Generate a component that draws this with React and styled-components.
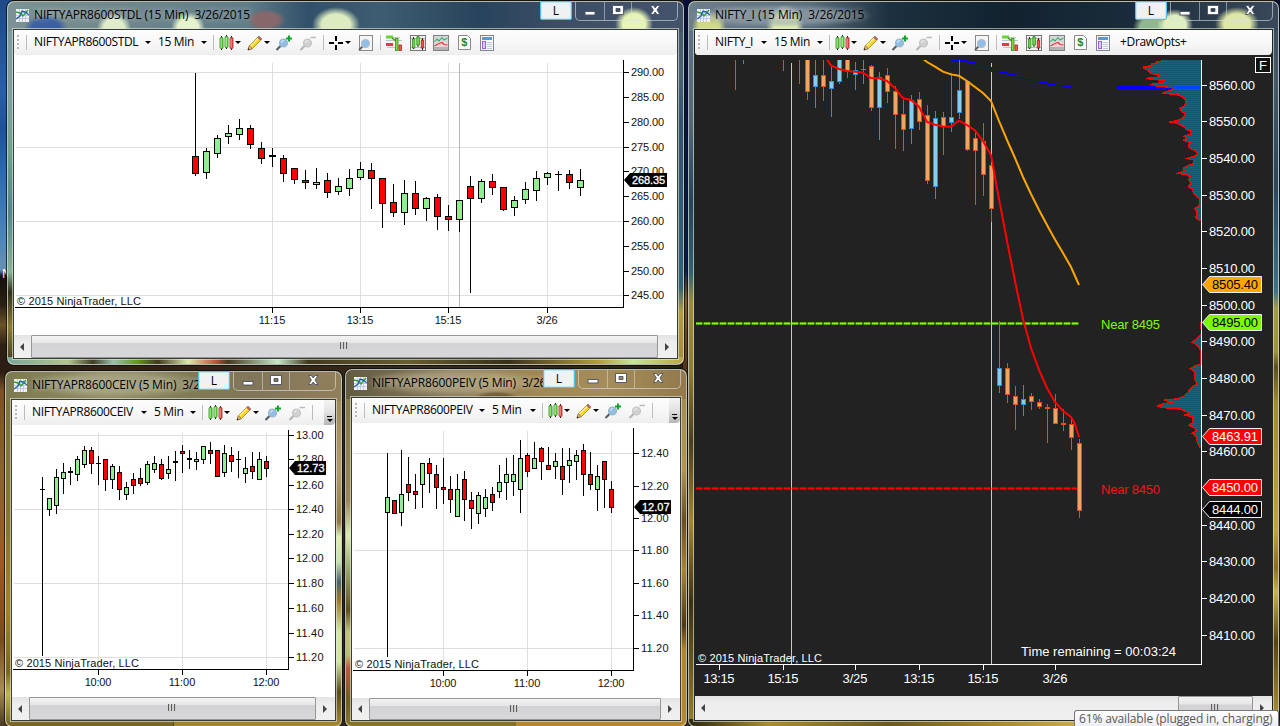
import React from 'react';
import styled, { createGlobalStyle } from 'styled-components';

const GlobalStyle = createGlobalStyle`
  * {
    box-sizing: border-box;
  }

  body {
    margin: 0;
    overflow: hidden;
    font-family: 'Open Sans', 'Noto Sans', sans-serif;
    font-size: 12px;
    color: #000000;
  }
`;

const Desktop = styled.div`
  position: relative;
  width: 1280px;
  height: 726px;
  overflow: hidden;
  background: linear-gradient(
        180deg,
        #1e4a86 0,
        #2a5ea6 90px,
        #1f5196 130px,
        #2b68ae 170px,
        #4f86b8 240px,
        #6a90b0 270px,
        #14100c 276px,
        #2b2014 305px,
        #6b5428 325px,
        #2e2013 345px,
        #2c1d12 372px,
        #7c4f24 390px,
        #8a6230 470px,
        #9c5a28 560px,
        #7a4a20 640px,
        #a88a58 690px,
        #4a3a20 726px
      )
      left / 12px 100% no-repeat,
    linear-gradient(180deg, #04103c 0, #0a1c50 270px, #7b5a26 300px, #4b2d14 380px, #3c2a12 726px)
      683px 0 / 8px 100% no-repeat,
    linear-gradient(180deg, #020a30 0, #173a5c 240px, #5a4a1e 320px, #3a2a10 726px)
      right / 6px 100% no-repeat,
    linear-gradient(90deg, #2c1d12, #3a2a18 40%, #1c140c 60%, #5a3c1e);
`;

const IconCaption = styled.span`
  position: absolute;
  left: 2px;
  top: 265px;
  color: #ffffff;
  font-size: 12px;
`;

const Window = styled.section`
  position: absolute;
  left: ${p => p.$x}px;
  top: ${p => p.$y}px;
  width: ${p => p.$w}px;
  height: ${p => p.$h}px;
  display: flex;
  flex-direction: column;
  padding: 0 5px 5px;
  border: 1px solid rgba(225, 235, 220, 0.75);
  border-radius: 7px;
  box-shadow: 0 0 0 1px rgba(10, 12, 16, 0.75);
  background: ${p => p.$glass};
`;

const TitleBar = styled.header`
  flex: 0 0 27px;
  display: flex;
  align-items: flex-start;
  min-width: 0;
`;

const TitleText = styled.h1`
  flex: 1;
  min-width: 0;
  margin: 4px 0 0 5px;
  overflow: hidden;
  white-space: pre;
  font-size: 12px;
  line-height: 18px;
  font-weight: 400;
  letter-spacing: ${p => p.$track || -0.14}px;
  text-shadow: 0 0 6px rgba(255, 255, 255, 0.45), 0 0 10px rgba(255, 255, 255, 0.35);
`;

const LinkButton = styled.button`
  flex: none;
  width: 32px;
  height: 19px;
  margin: -1px 3px 0 0;
  padding: 0;
  border: 1px solid #4fc3ee;
  border-radius: 2px;
  box-shadow: inset 0 0 0 1px #c6e6f6;
  background: #f1f1f1;
  font: 12px/16px 'Open Sans', sans-serif;
`;

const Controls = styled.div`
  flex: none;
  display: flex;
  width: 103px;
  height: 19px;
  border: 1px solid rgba(220, 226, 232, 0.6);
  border-top: 0;
  border-radius: 0 0 5px 5px;
`;

const Control = styled.span`
  flex: ${p => (p.$wide ? 1 : `0 0 ${p.$w}px`)};
  display: flex;
  justify-content: center;
  border-left: ${p => (p.$first ? 0 : '1px solid rgba(220, 226, 232, 0.5)')};
`;

const Client = styled.div`
  flex: 1;
  min-height: 0;
  display: flex;
  flex-direction: column;
  border: 1px solid rgba(35, 40, 35, 0.9);
  outline: 1px solid rgba(225, 235, 220, 0.6);
  background: ${p => (p.$dark ? '#222222' : '#ffffff')};
`;

const Toolbar = styled.nav`
  flex: 0 0 25px;
  display: flex;
  align-items: center;
  height: 25px;
  overflow: hidden;
  border-radius: 0 0 4px 3px;
  background: linear-gradient(180deg, #fdfdfd 0%, #f7f7f7 55%, #eeeeee 100%);
`;

const Grip = styled.i`
  width: 2px;
  height: 15px;
  margin: 0 7px 0 3px;
  background: repeating-linear-gradient(180deg, #b8b8b8 0 2px, transparent 2px 4px);
`;

const Separator = styled.i`
  flex: none;
  width: 1px;
  height: 15px;
  margin-left: ${p => p.$before || 0}px;
  margin-right: ${p => p.$after || 0}px;
  background: #bdbdbd;
`;

const ToolText = styled.span`
  flex: none;
  width: ${p => p.$w}px;
  white-space: nowrap;
  line-height: 18px;
  letter-spacing: ${p => p.$track || -0.34}px;
  margin-left: ${p => p.$before || 0}px;
  margin-top: -2px;
`;

const DropArrow = styled.i`
  flex: none;
  display: flex;
  justify-content: center;
  width: ${p => p.$w || 7}px;

  &::after {
    content: '';
    border: 3px solid transparent;
    border-top-color: #000000;
    border-bottom: 0;
  }
`;

const Tool = styled.svg`
  flex: none;
  display: block;
  margin-left: ${p => p.$before || 0}px;
  margin-top: ${p => p.$drop || 0}px;
`;

const Overflow = styled.span`
  flex: none;
  align-self: stretch;
  display: flex;
  flex-direction: column;
  align-items: center;
  justify-content: flex-end;
  gap: 2px;
  width: 11px;
  margin-left: auto;
  padding-bottom: 3px;
  border-radius: 0 0 3px 0;
  background: linear-gradient(180deg, #f4f4f4, #e2e2e2 50%, #b5b5b5);

  &::before {
    content: '';
    width: 5px;
    height: 1px;
    background: #000000;
  }

  &::after {
    content: '';
    border: 3px solid transparent;
    border-top-color: #000000;
    border-bottom: 0;
  }
`;

const Chart = styled.svg`
  flex: 1;
  min-height: 0;
  display: block;
  width: 100%;
  font-family: 'Liberation Sans', Arial, sans-serif;
`;

const ScrollBar = styled.div`
  flex: 0 0 ${p => p.$h || 22}px;
  display: flex;
  align-items: stretch;
  background: linear-gradient(180deg, #e3e3e3, #ededed 30%, #f0f0f0);
`;

const ScrollArrow = styled.i`
  flex: 0 0 ${p => p.$w || 17}px;
  display: flex;
  align-items: center;
  justify-content: center;
  padding-right: 1px;

  &::after {
    content: '';
    border: 4px solid transparent;
    border-left: ${p => (p.$left ? '0' : '4px solid #444444')};
    border-right: ${p => (p.$left ? '4px solid #444444' : '0')};
  }
`;

const Track = styled.div`
  flex: 1;
  display: flex;
  justify-content: flex-end;
`;

const Thumb = styled.div`
  width: ${p => p.$w || '100%'};
  display: flex;
  align-items: center;
  justify-content: center;
  border: 1px solid #979797;
  border-radius: 1px;
  background: linear-gradient(180deg, #f3f3f3 0, #e6e6e8 33%, #d2d2d5 36%, #d8d8da 100%);

  &::after {
    content: '';
    width: 8px;
    height: 7px;
    margin: -2px 2px 0 0;
    background: repeating-linear-gradient(90deg, #5f5f5f 0 1px, #c9c9c9 1px 2px, transparent 2px 3px);
  }
`;

const Tooltip = styled.div`
  position: absolute;
  left: 1074px;
  top: 710px;
  width: 205px;
  height: 16px;
  padding: 1px 0 0 4px;
  border: 1px solid #767676;
  border-bottom: 0;
  border-radius: 3px 3px 0 0;
  background: linear-gradient(180deg, #ffffff, #ececf4);
  color: #575757;
  line-height: 14px;
  letter-spacing: -0.15px;
  white-space: nowrap;
`;

function AppIcon() {
  return (
    <Tool width='13' height='13' viewBox='0 0 13 13' $before={3} $drop={7}>
      <rect width='13' height='13' fill='#eef0fa' />
      <path d='M0 3.5H13M0 6.5H13M0 9.5H13M3.5 0V13M6.5 0V13M9.5 0V13' stroke='#b5b8da' strokeWidth='.7' />
      <path d='M0 3L4 4L7 7L12 1' stroke='#2fa52f' strokeWidth='1.5' fill='none' />
      <path d='M0 10L4 7L6 2L9 3L13 6' stroke='#2763b4' strokeWidth='1.4' fill='none' />
    </Tool>
  );
}

function CandlesIcon() {
  return (
    <Tool width='15' height='16' viewBox='0 0 15 16' $before={5}>
      <path d='M2.5 1V15M7.5 0V14M12.5 1V15' stroke='#222222' />
      <rect x='1' y='2.5' width='3' height='11' rx='1' fill='#5fe03a' stroke='#2c7d1c' strokeWidth='.8' />
      <rect x='6' y='1.5' width='3' height='11' rx='1' fill='#70ea45' stroke='#2c7d1c' strokeWidth='.8' />
      <rect x='11' y='2.5' width='3' height='11' rx='1' fill='#f0504a' stroke='#a8231f' strokeWidth='.8' />
      <path d='M2 3.5V12.5M7 2.5V11.5M12 3.5V12.5' stroke='#ffffff' strokeOpacity='.6' strokeWidth='.8' />
    </Tool>
  );
}

function PencilIcon() {
  return (
    <Tool width='16' height='16' viewBox='0 0 16 16' $before={5}>
      <path d='M1 15L2.5 10.5L10.5 2.5L13.5 5.5L5.5 13.5Z' fill='#fbd425' stroke='#a98312' strokeWidth='.8' />
      <path d='M3.5 11L11.3 3.3' stroke='#fff29a' strokeWidth='1.2' />
      <path d='M1 15L2.3 10.8L5.3 13.6Z' fill='#ecc48c' stroke='#6b5030' strokeWidth='.6' />
      <path d='M.8 15.2L1.5 13L3 14.4Z' fill='#333333' />
      <path d='M10.5 2.5L12 1L15 4L13.5 5.5Z' fill='#e05a50' stroke='#7b8494' strokeWidth='.8' />
    </Tool>
  );
}

function ZoomIcon({ out, before }) {
  return (
    <Tool width='16' height='16' viewBox='0 0 16 16' $before={before}>
      <path d='M.5 15L5 10.5' stroke={out ? '#b5b5b5' : '#555f68'} strokeWidth='2.2' />
      <circle cx='7.5' cy='8' r='4' fill={out ? '#d0d0d0' : '#8fbfe6'} stroke={out ? '#c4c4c4' : '#a5b2bf'} strokeWidth='1.1' />
      <path d='M5.5 7.5Q6 5.6 8 5.5' stroke='#ffffff' strokeOpacity='.7' strokeWidth='1.2' fill='none' />
      {out ? (
        <path d='M10.5 2.5H16' stroke='#bbbbbb' strokeWidth='1.6' />
      ) : (
        <path d='M10 3.5H16M13 .5V6.5' stroke='#12a52d' strokeWidth='2' />
      )}
    </Tool>
  );
}

function CrossIcon() {
  return (
    <Tool width='14' height='14' viewBox='0 0 14 14' $before={5}>
      <path d='M0 7H5M9 7H14M7 0V5M7 9V14' stroke='#000000' strokeWidth='2' />
    </Tool>
  );
}

function PageZoomIcon() {
  return (
    <Tool width='15' height='16' viewBox='0 0 15 16' $before={6}>
      <rect x='1.5' y='.5' width='13' height='15' fill='#f5f5f5' stroke='#8a8a8a' />
      <path d='M1 15L5 11' stroke='#666666' strokeWidth='2' />
      <circle cx='7.5' cy='8.5' r='4' fill='#8fbfe6' stroke='#b5c0cc' strokeWidth='1.2' />
    </Tool>
  );
}

function DomIcon() {
  return (
    <Tool width='16' height='16' viewBox='0 0 16 16' $before={5}>
      <path d='M0 5.5H16M1 12.5H12M7 2.5H14' stroke='#c4c4c4' />
      <rect x='0' y='.5' width='7' height='3' fill='#62d832' />
      <path d='M6 3L10 6' stroke='#3b8f1f' strokeWidth='1.5' />
      <rect x='0' y='8' width='7' height='3' fill='#e83a32' />
      <rect x='9.5' y='3.5' width='2.5' height='12' fill='#6fdf3f' stroke='#358b20' strokeWidth='.8' />
      <rect x='13' y='10' width='2.5' height='5.5' fill='#f05a50' stroke='#a02822' strokeWidth='.8' />
    </Tool>
  );
}

function BarsBoxIcon() {
  return (
    <Tool width='16' height='16' viewBox='0 0 16 16' $before={8}>
      <rect x='.5' y='.5' width='15' height='15' fill='#f3f3f3' stroke='#777777' />
      <path d='M1 3.5H15M1 12.5H15' stroke='#bbbbbb' />
      <path d='M3.5 2V14M8 1V12M12.5 3V15' stroke='#222222' />
      <rect x='2.3' y='4' width='2.6' height='9' fill='#66dd3d' stroke='#2d7c1e' strokeWidth='.7' />
      <rect x='6.8' y='2' width='2.6' height='8' fill='#66dd3d' stroke='#2d7c1e' strokeWidth='.7' />
      <rect x='11.2' y='5' width='2.6' height='8' fill='#ee4b44' stroke='#98211d' strokeWidth='.7' />
    </Tool>
  );
}

function IndicatorIcon() {
  return (
    <Tool width='16' height='16' viewBox='0 0 16 16' $before={7}>
      <rect x='.5' y='.5' width='15' height='15' fill='#d9d9d9' stroke='#808080' />
      <rect x='1' y='12' width='14' height='3' fill='#b3b3b3' />
      <path d='M1.5 7L4 4L6 6L9 2.5L11 5L14.5 3' stroke='#2fae6d' strokeWidth='1.1' fill='none' />
      <path d='M1.5 11L5 9L9 7.5L11 9.5L14.5 10' stroke='#ee3434' strokeWidth='1.1' fill='none' />
    </Tool>
  );
}

function StrategyIcon() {
  return (
    <Tool width='13' height='15' viewBox='0 0 13 15' $before={9}>
      <path d='M.5 .5H9.5L12.5 3.5V14.5H.5Z' fill='#fbfbfb' stroke='#8a8a8a' />
      <text x='6.3' y='11.4' textAnchor='middle' fontSize='11' fontWeight='700' fontFamily='Liberation Sans, Arial, sans-serif' fill='#1b8a24'>
        $
      </text>
    </Tool>
  );
}

function PropertiesIcon() {
  return (
    <Tool width='14' height='16' viewBox='0 0 14 16' $before={9}>
      <rect x='.5' y='.5' width='13' height='15' fill='#f6f8fc' stroke='#7d8796' />
      <rect x='2' y='2' width='10' height='3' fill='#4f9be0' />
      <rect x='2.5' y='6.5' width='3' height='7' fill='#ddccff' stroke='#9a62ea' />
      <path d='M7 7.5H12M7 9.5H12M7 11.5H12M7 13.5H12' stroke='#c3cad6' />
    </Tool>
  );
}

function WindowButtons() {
  return (
    <Controls>
      <Control $first $w={28}>
        <svg width='14' height='19' viewBox='0 0 14 19'>
          <rect x='2' y='9.5' width='10' height='3.5' fill='#ffffff' stroke='#4a5060' strokeWidth='.9' />
        </svg>
      </Control>
      <Control $w={27}>
        <svg width='14' height='19' viewBox='0 0 14 19'>
          <path d='M1.5 3.5H12.5V12.5H1.5ZM5 6.5V9.5H9V6.5Z' fill='#ffffff' fillRule='evenodd' stroke='#4a5060' strokeWidth='.9' />
        </svg>
      </Control>
      <Control $wide>
        <svg width='14' height='19' viewBox='0 0 14 19'>
          <path
            d='M2.5 3.5H5.3L7.2 6L9.1 3.5H11.9L9 8L11.9 12.5H9.1L7.2 10L5.3 12.5H2.5L5.4 8Z'
            fill='#ffffff'
            stroke='#4a5060'
            strokeWidth='.9'
          />
        </svg>
      </Control>
    </Controls>
  );
}

function ChartToolbar({ symbol, symbolWidth, period, periodWidth, compact, extra }) {
  return (
    <Toolbar>
      <Grip />
      <Separator $after={7} />
      <ToolText $w={symbolWidth}>{symbol}</ToolText>
      <DropArrow $w={20} />
      <ToolText $w={periodWidth}>{period}</ToolText>
      <DropArrow $w={19} />
      <Separator />
      <CandlesIcon />
      <DropArrow $w={8} />
      <PencilIcon />
      <DropArrow $w={7} />
      <ZoomIcon before={6} />
      <ZoomIcon out before={8} />
      <Separator $before={7} />
      {compact ? (
        <Overflow />
      ) : (
        <>
          <CrossIcon />
          <DropArrow $w={9} />
          <PageZoomIcon />
          <Separator $before={7} />
          <DomIcon />
          <BarsBoxIcon />
          <IndicatorIcon />
          <StrategyIcon />
          <PropertiesIcon />
          {extra && <ToolText $w={70} $before={10}>{extra}</ToolText>}
        </>
      )}
    </Toolbar>
  );
}

const LIGHT = {
  u: ['#000000', '#90ee90'],
  d: ['#000000', '#ff0000'],
};

const DARK = {
  u: ['#1e90ff', '#87ceeb'],
  d: ['#ff4500', '#f4a460'],
};

// each bar is [high, body top, body bottom, low, direction]
function Candles({ bars, start, step, body, palette }) {
  return (
    <g shapeRendering='crispEdges'>
      {bars.map(([h, t, b, l, dir], i) => {
        const x = start + i * step;
        const half = (body - 1) / 2;
        const [line, fill] = palette[dir];
        return (
          <g key={x}>
            <rect x={x} y={h} width='1' height={l - h} fill={line} />
            <rect x={x - half} y={t} width={body} height={b - t} fill={line} />
            {b - t > 2 && <rect x={x - half + 1} y={t + 1} width={body - 2} height={b - t - 2} fill={fill} />}
          </g>
        );
      })}
    </g>
  );
}

function LightChart({ box, rows, cols, axisX, axisY, top, prices, times, labelY, marker, mark, session, ...candles }) {
  const [bx, by, bw, bh] = box;
  return (
    <Chart viewBox={box.join(' ')} preserveAspectRatio='xMinYMin slice' fontSize='11'>
      <rect x={bx} y={by} width={bw} height={bh} fill='#ffffff' />
      <g shapeRendering='crispEdges'>
        {rows.map(y => (
          <rect key={y} x={bx + 2} y={y} width={axisX - bx - 2} height='1' fill='#dedede' />
        ))}
        {cols.map(x => (
          <rect key={x} x={x} y={top + 3} width='1' height={axisY - top - 3} fill='#dedede' />
        ))}
        {session && <rect x={session} y={top + 3} width='1' height={axisY - top - 3} fill='#b8b8b8' />}
        <rect x={axisX} y={top} width='1' height={axisY - top + 1} fill='#000000' />
        <rect x={bx + 1} y={axisY} width={axisX - bx} height='1' fill='#000000' />
      </g>
      <Candles palette={LIGHT} {...candles} />
      {prices.map(([label, y]) => (
        <g key={label}>
          <rect x={axisX + 1} y={y} width='5' height='1' fill='#000000' />
          <text x={axisX + 8} y={y + 4} textLength={label.length * 5.5} fill='#111111'>
            {label}
          </text>
        </g>
      ))}
      {times.map(([label, x]) => (
        <g key={label}>
          <rect x={x} y={axisY + 1} width='1' height='5' fill='#000000' />
          <text x={x} y={labelY} textAnchor='middle' textLength={label.length * 5.3} fill='#111111'>
            {label}
          </text>
        </g>
      ))}
      <text x={bx + 3} y={mark} textLength='124' fill='#111111'>
        © 2015 NinjaTrader, LLC
      </text>
      <path
        d={`M${axisX + 1} ${marker[1] + 7}L${axisX + 7} ${marker[1]}H${axisX + marker[2]}V${marker[1] + 14}H${axisX + 7}Z`}
        fill='#000000'
      />
      <text x={axisX + 9} y={marker[1] + 11} textLength={marker[0].length * 5.5} fill='#ffffff' stroke='#ffffff' strokeWidth='.3'>
        {marker[0]}
      </text>
    </Chart>
  );
}

const STDL = [
  [73, 156, 174, 176, 'd'], [148, 151, 173, 179, 'u'], [135, 138, 154, 158, 'u'], [125, 133, 137, 144, 'u'],
  [119, 128, 135, 140, 'u'], [125, 128, 145, 149, 'd'], [142, 148, 159, 164, 'd'], [148, 155, 157, 167, 'd'],
  [155, 158, 174, 182, 'd'], [168, 168, 180, 184, 'd'], [170, 180, 183, 189, 'd'], [168, 182, 185, 189, 'u'],
  [173, 180, 193, 198, 'd'], [178, 186, 192, 195, 'u'], [169, 178, 189, 196, 'u'], [162, 169, 178, 180, 'u'],
  [163, 170, 179, 209, 'd'], [178, 178, 204, 228, 'd'], [184, 202, 213, 217, 'd'], [180, 193, 213, 225, 'u'],
  [181, 193, 209, 215, 'd'], [197, 198, 209, 221, 'u'], [194, 197, 217, 230, 'd'], [205, 216, 220, 231, 'd'],
  [200, 200, 220, 232, 'u'], [176, 186, 199, 293, 'd'], [179, 181, 199, 203, 'u'], [174, 181, 188, 195, 'd'],
  [187, 187, 210, 211, 'd'], [196, 200, 208, 216, 'u'], [182, 189, 200, 204, 'u'], [171, 178, 191, 201, 'u'],
  [172, 173, 178, 185, 'u'], [171, 174, 175, 191, 'd'], [170, 174, 183, 189, 'd'], [169, 180, 188, 196, 'u'],
];

const CEIV = [
  [477, 489, 490, 656, 'd'], [498, 498, 510, 516, 'u'], [469, 477, 506, 514, 'u'], [463, 472, 479, 494, 'u'],
  [467, 471, 473, 485, 'd'], [456, 459, 475, 481, 'u'], [446, 450, 465, 468, 'u'], [447, 450, 464, 474, 'd'],
  [456, 463, 464, 485, 'd'], [459, 459, 480, 491, 'd'], [464, 466, 480, 489, 'u'], [466, 472, 490, 500, 'd'],
  [482, 487, 495, 500, 'u'], [473, 479, 486, 494, 'd'], [468, 478, 484, 486, 'd'], [461, 464, 483, 485, 'u'],
  [456, 463, 470, 473, 'u'], [459, 464, 479, 480, 'd'], [456, 469, 474, 479, 'u'], [451, 461, 463, 481, 'd'],
  [445, 451, 454, 473, 'd'], [450, 458, 460, 469, 'd'], [452, 459, 462, 470, 'u'], [446, 446, 460, 464, 'u'],
  [442, 450, 454, 464, 'd'], [450, 450, 477, 477, 'd'], [445, 453, 473, 477, 'u'], [447, 455, 462, 472, 'd'],
  [451, 459, 460, 478, 'd'], [457, 468, 474, 483, 'u'], [452, 466, 472, 479, 'd'], [452, 459, 480, 480, 'u'],
  [456, 461, 469, 477, 'd'],
];

const PEIV = [
  [453, 497, 513, 657, 'u'], [500, 500, 514, 514, 'd'], [450, 494, 513, 526, 'u'], [457, 484, 493, 501, 'd'],
  [474, 491, 495, 509, 'd'], [463, 463, 485, 508, 'u'], [458, 463, 474, 493, 'd'], [465, 474, 488, 509, 'd'],
  [458, 487, 490, 504, 'd'], [476, 489, 500, 513, 'd'], [474, 489, 517, 517, 'u'], [471, 479, 500, 521, 'd'],
  [492, 500, 509, 529, 'd'], [492, 495, 514, 524, 'u'], [489, 497, 509, 517, 'u'], [487, 494, 503, 511, 'd'],
  [465, 482, 492, 498, 'u'], [458, 474, 483, 500, 'u'], [455, 474, 482, 496, 'u'], [440, 458, 490, 513, 'u'],
  [453, 455, 472, 477, 'd'], [442, 458, 469, 469, 'u'], [447, 448, 462, 480, 'd'], [447, 465, 470, 470, 'd'],
  [453, 461, 467, 479, 'u'], [448, 466, 480, 495, 'd'], [448, 460, 466, 483, 'u'], [450, 455, 462, 480, 'u'],
  [444, 450, 475, 496, 'd'], [452, 474, 485, 490, 'd'], [465, 476, 490, 511, 'u'], [461, 461, 480, 508, 'd'],
  [481, 489, 508, 513, 'd'],
];

const NIFTY = [
  [50, 50, 52, 90, 'd'], [50, 50, 52, 64, 'u'], [50, 50, 50, 50, 'u'], [50, 50, 50, 50, 'u'], [50, 50, 50, 50, 'u'],
  [50, 50, 50, 50, 'u'], [50, 50, 52, 71, 'd'], [50, 50, 50, 50, 'u'], [50, 50, 52, 84, 'd'],
  [50, 50, 92, 100, 'd'], [50, 75, 87, 108, 'u'], [50, 75, 87, 101, 'd'], [67, 81, 89, 117, 'u'],
  [50, 50, 82, 84, 'u'], [50, 50, 72, 78, 'd'], [62, 70, 75, 90, 'u'], [60, 69, 70, 84, 'u'],
  [65, 66, 108, 111, 'd'], [72, 77, 108, 140, 'u'], [68, 75, 92, 103, 'd'], [86, 91, 115, 149, 'd'],
  [100, 114, 130, 151, 'd'], [95, 100, 129, 144, 'u'], [92, 99, 122, 130, 'd'], [105, 115, 181, 184, 'd'],
  [111, 118, 187, 199, 'u'], [112, 117, 127, 155, 'd'], [73, 117, 123, 132, 'u'], [50, 90, 113, 119, 'u'],
  [81, 81, 150, 151, 'd'], [132, 138, 151, 205, 'd'], [123, 141, 175, 196, 'd'], [165, 165, 209, 222, 'd'],
  [321, 368, 386, 393, 'u'], [363, 368, 395, 403, 'd'], [386, 396, 405, 430, 'd'], [385, 399, 405, 416, 'u'],
  [393, 396, 402, 410, 'd'], [399, 402, 407, 409, 'd'], [404, 407, 409, 443, 'd'], [394, 408, 424, 424, 'd'],
  [409, 423, 425, 431, 'd'], [419, 424, 438, 450, 'd'], [439, 443, 511, 518, 'd'],
];

const FAST_MA =
  '826,58 831,65.5 839,69 847,71 855,71.8 863,72.6 871,78 879,78.3 887,81 895,88.3 903,98.3 911,100 919,106.7 927,122 935,124.7 943,126.5 951,126.7 959,120.7 967,125 975,130.5 983,141 991,155 999,199 1007,241 1015,281 1023,319 1031,348 1039,370 1047,388 1055,402 1063,411 1071,417 1075,424 1079,437';

const SLOW_MA =
  '922,58 927,62 935,66.7 943,71.7 951,74.4 959,75.8 967,81 975,87 983,93 991,101 999,121 1007,140 1015,158 1023,177 1031,194 1039,210 1047,225 1055,239.5 1063,253 1071,267 1079,285';

const VWAP =
  'M951 60.5H967V62.5H975V65.5H983V67.5H991V71.5H999V72.5H1007V74.5H1015V77.5H1023V79.5H1031V81.5H1039V82.5H1047V84.5H1055V85.5H1063V86.5H1071V88.5';

// volume profile outline, three units to the pixel
const PROFILE_TOP =
  '662,170 545,170 545,180 543,184 530,186 527,190 515,192 520,197 490,200 492,205 500,208 507,214 510,219 520,222 540,226 535,230 525,233 498,235 510,237 540,240 555,244 548,248 530,250 515,253 530,258 580,263 575,270 560,275 550,279 570,282 595,285 605,290 615,297 618,310 612,318 600,325 602,332 614,340 612,350 605,358 590,362 567,366 590,369 600,375 612,380 618,388 635,394 630,403 612,409 620,414 610,420 630,428 625,440 634,447 650,455 653,463 640,470 622,475 640,480 641,490 625,497 610,505 612,512 595,520 620,524 630,530 627,540 634,548 625,560 637,567 640,577 645,585 658,595 660,605 657,618 645,625 650,635 648,652 655,658 662,662';

const PROFILE_LOW =
  '662,245 662,283 655,290 648,298 637,307 648,313 655,320 662,330 662,372 645,378 630,386 640,392 645,400 643,415 648,425 650,432 635,443 625,455 610,470 590,477 553,480 575,487 545,493 532,498 550,503 600,507 620,515 630,520 615,525 640,532 638,548 627,556 645,565 648,572 637,580 650,590 650,600 655,612 662,625';

const TAGS = [
  ['8505.40', 276, '#ffa500', '#000000'],
  ['8495.00', 314, '#7cfc00', '#000000'],
  ['8463.91', 428, '#ff0000', '#ffffff'],
  ['8450.00', 479, '#ff0000', '#ffffff'],
  ['8444.00', 501, '#000000', '#ffffff'],
];

const DARK_PRICES = [
  ['8560.00', 85], ['8550.00', 121], ['8540.00', 158], ['8530.00', 195], ['8520.00', 231], ['8510.00', 268],
  ['8500.00', 305], ['8490.00', 341], ['8480.00', 378], ['8470.00', 415], ['8460.00', 451], ['8440.00', 525],
  ['8430.00', 561], ['8420.00', 598], ['8410.00', 635],
];

const DARK_TIMES = [['13:15', 719], ['15:15', 783], ['3/25', 855], ['13:15', 919], ['15:15', 983], ['3/26', 1055]];

function DarkChart() {
  return (
    <Chart viewBox='695 55 577 641' preserveAspectRatio='xMinYMin slice' fontSize='13'>
      <defs>
        <clipPath id='plot'>
          <rect x='695' y='60' width='507' height='605' />
        </clipPath>
        <pattern id='levels' width='3' height='6' patternUnits='userSpaceOnUse'>
          <rect width='3' height='6' fill='#17607a' />
          <rect width='3' height='2' fill='#135268' />
        </pattern>
      </defs>
      <rect x='695' y='55' width='577' height='641' fill='#222222' />
      <g clipPath='url(#plot)'>
        <rect x='791' y='63' width='1' height='601' fill='#c8c8c8' />
        <rect x='991' y='63' width='1' height='601' fill='#c8c8c8' />
        <rect x='1117' y='86' width='84' height='3' fill='#0000ff' />
        <g shapeRendering='crispEdges'>
          <g transform='translate(980) scale(.33333)' fill='url(#levels)'>
            <polygon points={PROFILE_TOP} />
            <polyline points={PROFILE_TOP} fill='none' stroke='#ff0000' strokeWidth='4' />
          </g>
          <g transform='translate(980 240) scale(.33333)' fill='url(#levels)'>
            <polygon points={PROFILE_LOW} />
            <polyline points='662,245 662,268' stroke='#ff0000' strokeWidth='3' />
            <polyline points={PROFILE_LOW.slice(PROFILE_LOW.indexOf('662,283'))} fill='none' stroke='#ff0000' strokeWidth='4' />
          </g>
        </g>
        <rect x='1174' y='86' width='27' height='3' fill='#0048ff' />
        <path d={VWAP} stroke='#0000ff' fill='none' shapeRendering='crispEdges' />
        <path d='M696 323.5H1079' stroke='#7cfc00' strokeOpacity='.45' strokeWidth='2' />
        <path d='M696 323.5H1079' stroke='#7cfc00' strokeWidth='2' strokeDasharray='6 2' />
        <path d='M696 488.5H1079' stroke='#ff0000' strokeOpacity='.45' strokeWidth='2' />
        <path d='M696 488.5H1079' stroke='#ff0000' strokeWidth='2' strokeDasharray='6 2' />
        <Candles bars={NIFTY} start={735} step={8} body={5} palette={DARK} />
        <polyline points={SLOW_MA} fill='none' stroke='#ffa500' strokeWidth='2' />
        <polyline points={FAST_MA} fill='none' stroke='#ff0000' strokeWidth='2' />
      </g>
      <rect x='1201' y='60' width='1' height='605' fill='#ffffff' />
      <rect x='696' y='664' width='506' height='1' fill='#ffffff' />
      {DARK_PRICES.map(([label, y]) => (
        <g key={label} fill='#ffffff'>
          <rect x='1202' y={y} width='5' height='1' />
          <text x='1209' y={y + 5} textLength='46'>
            {label}
          </text>
        </g>
      ))}
      {DARK_TIMES.map(([label, x]) => (
        <g key={x} fill='#ffffff'>
          <rect x={x} y='665' width='1' height='5' />
          <text x={x} y='682.5' textAnchor='middle' textLength={label.length * 6.2}>
            {label}
          </text>
        </g>
      ))}
      {TAGS.map(([label, y, fill, ink]) => (
        <g key={label}>
          <path d={`M1202.5 ${y + 8.5}L1209.5 ${y + 0.5}H1261.5V${y + 16.5}H1209.5Z`} fill={fill} stroke='#f0f0f0' />
          <text x='1212' y={y + 13} textLength='46' fill={ink}>
            {label}
          </text>
        </g>
      ))}
      <text x='1101' y='328.5' textLength='59' fill='#7cfc00'>
        Near 8495
      </text>
      <text x='1101' y='493.5' textLength='59' fill='#f01414'>
        Near 8450
      </text>
      <text x='1021' y='656' textLength='155' fill='#ffffff'>
        Time remaining = 00:03:24
      </text>
      <text x='698' y='662' fontSize='11' textLength='124' fill='#ffffff'>
        © 2015 NinjaTrader, LLC
      </text>
      <rect x='1255.5' y='57.5' width='15' height='15' fill='#111111' stroke='#ffffff' />
      <text x='1259' y='70' fontSize='13' fill='#ffffff'>
        F
      </text>
    </Chart>
  );
}

function ChartWindow({ frame, glass, title, track, dark, toolbar, scroll, children }) {
  const [x, y, w, h] = frame;
  return (
    <Window $x={x} $y={y} $w={w} $h={h} $glass={glass}>
      <TitleBar>
        <AppIcon />
        <TitleText $track={track}>{title}</TitleText>
        <LinkButton>L</LinkButton>
        <WindowButtons />
      </TitleBar>
      <Client $dark={dark}>
        <ChartToolbar {...toolbar} />
        {children}
        {scroll}
      </Client>
    </Window>
  );
}

function FullScroll({ height }) {
  return (
    <ScrollBar $h={height}>
      <ScrollArrow $left />
      <Track>
        <Thumb />
      </Track>
      <ScrollArrow $w={19} />
    </ScrollBar>
  );
}

const blob = (x, y, rx, ry, color) =>
  `radial-gradient(${rx}px ${ry}px at ${x}px ${y}px, ${color} 0, ${color} 60%, transparent 100%)`;

// keeps the blurred backdrop inside the title bar
const inTitle = layers => layers.map(layer => `${layer} top / 100% 29px no-repeat`);

const GLASS_STDL = [
  ...inTitle([
    blob(38, 25, 22, 12, 'rgba(35, 75, 170, .7)'),
    blob(106, 26, 17, 15, '#dfecca'),
    blob(180, 26, 17, 16, '#e6f4ce'),
    blob(328, 23, 24, 18, '#dcebc0'),
    blob(258, 18, 20, 11, '#87686a'),
    blob(626, 22, 19, 17, '#e6f5b4'),
    'linear-gradient(90deg, #7c9294 0, #71898c 90px, #5f7d88 240px, #31506a 300px, #3e5d72 370px, #27445c 470px, #3e4e66 560px, #44536c 677px)',
  ]),
  'linear-gradient(90deg, #7ba79c 0, #b3c78d 60px, #3f3c25 85px, #9cc0ae 105px, #62941f 130px, #42381e 150px, #dbeab0 180px, #c25b3f 206px, #443a1f 220px, #c7e6c9 270px, #41381e 300px, #675d2d 400px, #382f19 500px, #b19b41 590px, #c6e59b 625px, #bba348 677px) bottom / 100% 7px no-repeat',
  'linear-gradient(180deg, #80989c 0, #7e9fa0 100px, #6fa28a 150px, #54858b 210px, #8ab295 270px, #2f3119 290px, #8c7c34 325px, #3b381f 363px) left / 50% 100% no-repeat',
  'linear-gradient(180deg, #44536c 0, #4b6177 70px, #315370 120px, #2f6277 285px, #b59b3e 310px, #a58a34 363px) right / 50% 100% no-repeat',
].join(', ');

const GLASS_CEIV = [
  ...inTitle([
    blob(110, 12, 90, 15, 'rgba(190, 190, 160, .4)'),
    'linear-gradient(90deg, #7d7a51 0, #8e8a62 100px, #807a54 190px, #82765a 250px, #927f5b 337px)',
  ]),
  'linear-gradient(180deg, #7e7446 0, #857535 150px, #9f842d 240px, #7c6522 300px, #c2b451 322px, #6f5d1f 356px) left / 50% 100% no-repeat',
  'linear-gradient(180deg, #99845a 0, #b29a68 100px, #907744 150px, #dff0b6 165px, #c6e1b0 190px, #4a626a 210px, #9b7a28 228px, #d5e8a6 260px, #d3e5a0 290px, #5b491a 320px, #a98b31 356px) right / 50% 100% no-repeat',
].join(', ');

const GLASS_PEIV = [
  ...inTitle([
    blob(150, 28, 22, 7, 'rgba(80, 60, 30, .5)'),
    blob(110, 12, 90, 15, 'rgba(215, 200, 160, .35)'),
    'linear-gradient(90deg, #625b43 0, #85795a 100px, #a08753 190px, #a58d5b 260px, #93794a 342px)',
  ]),
  'linear-gradient(180deg, #7e7446 0, #9b8656 130px, #d8ecb0 165px, #98a66c 200px, #604e1d 240px, #c2c47d 262px, #b9bd73 285px, #c3583c 298px, #6f5d1f 330px, #8a7629 358px) left / 50% 100% no-repeat',
  'linear-gradient(180deg, #a38650 0, #b3954f 100px, #6d4c20 150px, #a98435 200px, #4f3714 255px, #b2842c 280px, #b48730 358px) right / 50% 100% no-repeat',
].join(', ');

const GLASS_NIFTY = [
  ...inTitle([
    blob(90, 14, 95, 12, 'rgba(150, 165, 175, .55)'),
    blob(20, 24, 17, 15, '#d1d987'),
    blob(96, 23, 19, 20, '#e1edb0'),
    blob(486, 23, 18, 16, '#e0efc0'),
    blob(462, 25, 18, 14, '#8fb892'),
    blob(548, 22, 22, 17, '#dde8a4'),
    'linear-gradient(90deg, #6d7e8b 0, #5b6f7d 120px, #1c303f 200px, #12222f 320px, #1a2b3b 440px, #39495b 590px)',
  ]),
  'linear-gradient(90deg, #2c2812 0, #a88d30 80px, #6b5820 200px, #a3842a 300px, #d0b050 400px, #7a6324 590px) bottom / 100% 7px no-repeat',
  'linear-gradient(180deg, #61748a 0, #54687a 120px, #254457 200px, #31616f 270px, #9c8b3d 300px, #8d7c34 370px, #4a3d1c 440px, #a48532 520px, #3c3014 600px, #96802f 726px) left / 50% 100% no-repeat',
  'linear-gradient(180deg, #39495b 0, #45586b 80px, #28465c 180px, #3f7287 290px, #a59a42 306px, #9f9238 350px, #5b4d20 365px, #a08a2e 400px, #c0a23c 530px, #8b6c20 565px, #c7b24c 590px, #57430f 640px, #bb9a3a 726px) right / 50% 100% no-repeat',
].join(', ');

export default function App() {
  return (
    <>
      <GlobalStyle />
      <Desktop>
        <IconCaption>N</IconCaption>
        <ChartWindow
          frame={[7, 1, 677, 364]}
          glass={GLASS_STDL}
          title='NIFTYAPR8600STDL (15 Min)  3/26/2015'
          toolbar={{ symbol: 'NIFTYAPR8600STDL', symbolWidth: 104, period: '15 Min', periodWidth: 36 }}
          scroll={<FullScroll height={23} />}
        >
          <LightChart
            box={[14, 55, 663, 280]}
            bars={STDL}
            start={195}
            step={11}
            body={7}
            rows={[72, 147, 221, 295]}
            cols={[272, 360, 448, 547]}
            session={459}
            axisX={623}
            axisY={307}
            top={60}
            prices={[
              ['290.00', 72], ['285.00', 97], ['280.00', 122], ['275.00', 147], ['270.00', 171],
              ['265.00', 196], ['260.00', 221], ['255.00', 246], ['250.00', 271], ['245.00', 295],
            ]}
            times={[['11:15', 272], ['13:15', 360], ['15:15', 448], ['3/26', 547]]}
            labelY={324}
            mark={305}
            marker={['268.35', 173, 44]}
          />
        </ChartWindow>

        <ChartWindow
          frame={[5, 371, 337, 356]}
          glass={GLASS_CEIV}
          title='NIFTYAPR8600CEIV (5 Min)  3/26/2015'
          toolbar={{ symbol: 'NIFTYAPR8600CEIV', symbolWidth: 102, period: '5 Min', periodWidth: 29, compact: true }}
          scroll={<FullScroll height={23} />}
        >
          <LightChart
            box={[12, 425, 323, 272]}
            bars={CEIV}
            start={42}
            step={7}
            body={5}
            rows={[435, 509, 583, 657]}
            cols={[98, 182, 266]}
            axisX={288}
            axisY={669}
            top={430}
            prices={[
              ['13.00', 435], ['12.80', 459], ['12.60', 485], ['12.40', 509], ['12.20', 534],
              ['12.00', 558], ['11.80', 583], ['11.60', 608], ['11.40', 633], ['11.20', 657],
            ]}
            times={[['10:00', 98], ['11:00', 182], ['12:00', 266]]}
            labelY={686}
            mark={667}
            marker={['12.73', 461, 38]}
          />
        </ChartWindow>

        <ChartWindow
          frame={[345, 369, 342, 358]}
          glass={GLASS_PEIV}
          title='NIFTYAPR8600PEIV (5 Min)  3/26/2015'
          toolbar={{ symbol: 'NIFTYAPR8600PEIV', symbolWidth: 100, period: '5 Min', periodWidth: 31, compact: true }}
          scroll={<FullScroll height={22} />}
        >
          <LightChart
            box={[352, 423, 328, 275]}
            bars={PEIV}
            start={387}
            step={7}
            body={5}
            rows={[453, 550, 648]}
            cols={[443, 527, 611]}
            axisX={633}
            axisY={670}
            top={428}
            prices={[
              ['12.40', 453], ['12.20', 486], ['12.00', 518], ['11.80', 550], ['11.60', 583], ['11.40', 615], ['11.20', 648],
            ]}
            times={[['10:00', 443], ['11:00', 527], ['12:00', 611]]}
            labelY={687}
            mark={668}
            marker={['12.07', 500, 38]}
          />
        </ChartWindow>

        <ChartWindow
          frame={[688, 1, 591, 726]}
          glass={GLASS_NIFTY}
          title='NIFTY_I (15 Min)  3/26/2015'
          track={-0.09}
          dark
          toolbar={{ symbol: 'NIFTY_I', symbolWidth: 39, period: '15 Min', periodWidth: 36, extra: '+DrawOpts+' }}
          scroll={
            <ScrollBar $h={24}>
              <ScrollArrow $left />
              <Track>
                <Thumb $w='75px' />
              </Track>
              <ScrollArrow $w={19} />
            </ScrollBar>
          }
        >
          <DarkChart />
        </ChartWindow>
        <Tooltip>61% available (plugged in, charging)</Tooltip>
      </Desktop>
    </>
  );
}
